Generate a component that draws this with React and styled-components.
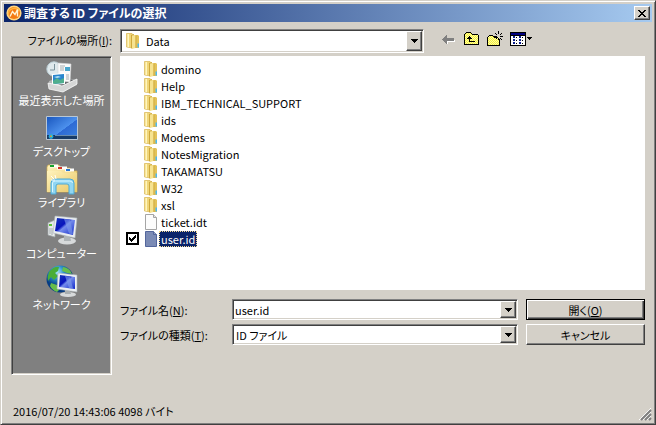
import { useState } from "react";
import styled, { createGlobalStyle, css } from "styled-components";

const GlobalStyle = createGlobalStyle`
  * {
    box-sizing: border-box;
  }
  body {
    margin: 0;
    background: #d4d0c8;
  }
  body, button, input, select {
    font-family: "Noto Sans CJK JP", "Liberation Sans", sans-serif;
    font-size: 11px;
    line-height: 14px;
    font-feature-settings: "palt";
    color: #000;
  }
`;

const raised = css`
  border: 1px solid;
  border-color: #fff #404040 #404040 #fff;
  box-shadow: inset -1px -1px #808080;
`;
const sunken = css`
  border: 1px solid;
  border-color: #808080 #fff #fff #808080;
  box-shadow: inset 1px 1px #404040, inset -1px -1px #d4d0c8;
`;

const Dialog = styled.div`
  display: flex;
  flex-direction: column;
  min-height: 100vh;
  padding: 3px;
  background: #d4d0c8;
  border: 1px solid;
  border-color: #d4d0c8 #404040 #404040 #d4d0c8;
  box-shadow: inset 1px 1px #fff, inset -1px -1px #808080;
`;
const TitleBar = styled.header`
  display: flex;
  align-items: center;
  gap: 2px;
  height: 18px;
  padding: 0 2px;
  background: linear-gradient(to right, #0a246a, #a6caf0);
`;
const Title = styled.h1`
  flex: 1;
  margin: 0;
  font-size: 12px;
  line-height: 18px;
  font-weight: 700;
  color: #fff;
`;
const CloseButton = styled.button`
  ${raised}
  display: flex;
  align-items: center;
  justify-content: center;
  width: 16px;
  height: 14px;
  padding: 0;
  background: #d4d0c8;
`;
const LookIn = styled.div`
  display: flex;
  align-items: center;
  padding: 7px 6px 3px 8px;
`;
const LookInLabel = styled.label`
  width: 108px;
  padding: 0 8px 2px 0;
  text-align: right;
  white-space: nowrap;
`;
const Combo = styled.div`
  ${sunken}
  display: flex;
  flex: ${(p) => (p.$wide ? "1" : "0 1 304px")};
  min-width: 0;
  height: ${(p) => (p.$tall ? "24px" : "21px")};
  padding: 1px;
  background: #fff;
`;
const ComboIcon = styled.span`
  display: flex;
  align-items: center;
  padding-left: 4px;
`;
const Select = styled.select`
  appearance: none;
  flex: 1;
  min-width: 0;
  margin-right: -16px;
  padding: 0 16px 0 ${(p) => p.$indent || "2px"};
  border: 0;
  outline: 0;
  background: transparent;
`;
const TextInput = styled.input`
  flex: 1;
  min-width: 0;
  padding: 0 1px;
  border: 0;
  outline: 0;
  background: transparent;
`;
const Drop = styled.span`
  ${raised}
  display: flex;
  align-items: center;
  justify-content: center;
  width: 16px;
  padding: 0;
  background: #d4d0c8;
  pointer-events: none;
`;
const DropButton = styled(Drop)`
  pointer-events: auto;
`;
const Toolbar = styled.div`
  display: flex;
  align-items: center;
  gap: 8px;
  padding: 0 0 4px 18px;
`;
const ToolButton = styled.button`
  display: flex;
  padding: 0;
  border: 0;
  background: none;
  svg {
    overflow: visible;
  }
`;
const Content = styled.div`
  display: flex;
  flex: 1;
  gap: 8px;
  padding: 0 7px;
`;
const Places = styled.nav`
  ${sunken}
  width: 101px;
  flex: none;
  padding: 4px 0;
  background: #808080;
`;
const Place = styled.button`
  display: flex;
  flex-direction: column;
  align-items: center;
  width: 100%;
  height: 51px;
  padding: 0;
  border: 0;
  background: none;
  color: #fff;
  white-space: nowrap;
`;
const Main = styled.main`
  display: flex;
  flex: 1;
  flex-direction: column;
  min-width: 0;
`;
const FileList = styled.ul`
  flex: 1;
  margin: 0;
  padding: 4px 0 0 6px;
  list-style: none;
  background: #fff;
`;
const FileRow = styled.li`
  display: grid;
  grid-template-columns: 18px 15px max-content;
  align-items: center;
  height: 17px;
`;
const FileName = styled.label`
  grid-column: 3;
  padding: 0 1px;
  line-height: 14px;
  border: 1px dotted ${(p) => (p.$selected ? "#f5db95" : "transparent")};
  background: ${(p) => (p.$selected ? "#0a246a" : "transparent")};
  color: ${(p) => (p.$selected ? "#fff" : "#000")};
`;
const FileIcon = styled.span`
  display: flex;
  grid-column: 2;
`;
const CheckCell = styled.span`
  display: grid;
  > * {
    grid-area: 1 / 1;
  }
  svg {
    pointer-events: none;
  }
`;
const Checkbox = styled.input`
  appearance: none;
  width: 13px;
  height: 13px;
  margin: 0;
  border: 2px solid #000;
  background: #fff;
`;
const Form = styled.div`
  display: grid;
  grid-template-columns: 104px 1fr 119px;
  column-gap: 8px;
  row-gap: 4px;
  align-items: center;
  padding: 9px 0 30px;
`;
const FieldLabel = styled.label`
  white-space: nowrap;
`;
const PushButton = styled.button`
  ${raised}
  height: 21px;
  padding: 0;
  background: #d4d0c8;
  ${(p) =>
    p.$primary &&
    css`
      border-color: #000;
      box-shadow: inset 1px 1px #fff, inset -1px -1px #404040,
        inset -2px -2px #808080;
    `}
`;
const StatusBar = styled.footer`
  display: flex;
  align-items: flex-end;
  justify-content: space-between;
  height: 46px;
  padding-left: 9px;
`;
const StatusText = styled.span`
  padding-bottom: 3px;
`;

const Arrow = () => (
  <svg width="7" height="4" shapeRendering="crispEdges">
    <path d="M0 0h7v1h-1v1h-1v1h-1v1h-1v-1h-1v-1h-1v-1h-1z" />
  </svg>
);

const AppIcon = () => (
  <svg width="16" height="16" viewBox="0 0 16 16">
    <circle cx="8" cy="8" r="7.6" fill="#ffd681" />
    <circle cx="8" cy="8" r="6" fill="#f57a12" />
    <path d="M2.5 10a6 6 0 0 1 11-4" fill="none" stroke="#ffb43c" strokeWidth="1.5" />
    <path d="M4 11.5l2.5-5 2.5 3 2.5-5v7" fill="none" stroke="#fff3d5" strokeWidth="1.4" />
  </svg>
);

const Folder = () => (
  <svg width="14" height="16" viewBox="0 0 14 16">
    <path d="M8 2h4l1 1v12H8z" fill="#e3c35a" />
    <path d="M.5.5H6l1 1V15l-6.5-1z" fill="#f0d679" stroke="#d9b654" strokeWidth=".7" />
    <path d="M1.5 1H3v13H1.5z" fill="#fff6bf" />
    <path d="M5 2l3-1v13.5l-3 1z" fill="#cfa93b" />
    <path d="M6 2.5L9.5 2v13L6 16z" fill="#f6e391" />
    <path d="M9.5 2.5h1V15h-1z" fill="#d2ad40" />
    <path d="M11.5 10.5H13v4h-1.5z" fill="#4ab8f0" />
  </svg>
);

const Page = ({ selected }) => (
  <svg width="14" height="16" viewBox="0 0 14 16">
    <path
      d="M1.5.5h8l3 3v12h-11z"
      fill={selected ? "#7b8bb5" : "#fcfcfc"}
      stroke={selected ? "#53669c" : "#a5a5a5"}
    />
    <path
      d="M9.5.5v3h3"
      fill={selected ? "#93a0c4" : "#e5e5e5"}
      stroke={selected ? "#53669c" : "#a5a5a5"}
    />
  </svg>
);

const BackIcon = () => (
  <svg width="14" height="16" shapeRendering="crispEdges">
    <path d="M2 9h11v2H6v2H5v-1H4v-1H3v-1H2z" fill="#fff" />
    <path d="M0 8h1V7h1V6h1V5h1V4h1v3h7v3H5v3H4v-1H3v-1H2v-1H1V9H0z" fill="#808080" />
  </svg>
);

const Hatch = ({ id }) => (
  <pattern id={id} width="2" height="2" patternUnits="userSpaceOnUse">
    <path d="M0 0h2v2H0z" fill="#ffffa0" />
    <path d="M0 0h1v1H0zM1 1h1v1H1z" fill="#f4ee42" />
  </pattern>
);

const UpIcon = () => (
  <svg width="15" height="16" shapeRendering="crispEdges">
    <defs>
      <Hatch id="up" />
    </defs>
    <path d="M1 2h1V1h5v1h1v1h6v11H1z" fill="url(#up)" />
    <path d="M2 1h5v1H2zM1 2h1v1H1zM7 2h1v1H7zM8 3h6v1H8zM0 3h1v11H0zM14 4h1v10h-1zM1 13h13v1H1z" />
    <path d="M5 5h1v1h1v1h1v1H6v2h5v1H5V8H3V7h1V6h1z" />
  </svg>
);

const NewFolderIcon = () => (
  <svg width="15" height="16" shapeRendering="crispEdges">
    <defs>
      <Hatch id="new" />
    </defs>
    <path d="M1 5h6v1h5v8H1z" fill="url(#new)" />
    <path d="M2 4h4v1H2zM1 5h1v1H1zM6 5h1v1H6zM7 6h4v1H7zM0 6h1v8H0zM12 8h1v6h-1zM0 14h13v1H0z" />
    <path d="M11 0h1v3h-1zM11 7h1v2h-1zM7 5h3v1H7zM13 5h3v1h-3zM8 2h1v1H8zM9 3h1v1H9zM13 3h1v1h-1zM14 2h1v1h-1zM9 7h1v1H9zM13 7h1v1h-1zM14 8h1v1h-1z" />
  </svg>
);

const ViewIcon = () => (
  <svg width="23" height="16" shapeRendering="crispEdges">
    <path d="M0 1h16v14H0z" />
    <path d="M1 2h14v2H1z" fill="#000080" />
    <path d="M1 5h14v9H1z" fill="#fff" />
    <path
      d="M3 5h2v2H3zM9 5h2v2H9zM3 8h2v2H3zM9 8h2v2H9zM3 11h2v2H3zM9 11h2v2H9z"
      fill="#0a1e8c"
    />
    <path d="M6 6h1v1H6zM12 6h1v1h-1zM6 9h1v1H6zM12 9h1v1h-1zM6 12h1v1H6zM12 12h1v1h-1z" />
    <path d="M17 6h5v1h-1v1h-1v1h-1V8h-1V7h-1z" />
  </svg>
);

const Gradients = () => (
  <svg width="0" height="0" style={{ display: "block" }} aria-hidden="true">
    <defs>
      <linearGradient id="screen" x1="0" y1="0" x2="1" y2="1">
        <stop offset="0" stopColor="#1836b8" />
        <stop offset=".4" stopColor="#0714bd" />
        <stop offset=".5" stopColor="#748cec" />
        <stop offset="1" stopColor="#1027ca" />
      </linearGradient>
      <linearGradient id="desk" x1="0" y1="0" x2="1" y2="1">
        <stop offset="0" stopColor="#1855bd" />
        <stop offset=".55" stopColor="#4d91ed" />
        <stop offset=".56" stopColor="#2d6ad5" />
        <stop offset="1" stopColor="#3b83df" />
      </linearGradient>
      <linearGradient id="gold" x1="0" y1="0" x2="1" y2="1">
        <stop offset="0" stopColor="#fff3bd" />
        <stop offset="1" stopColor="#e8c766" />
      </linearGradient>
      <radialGradient id="globe" cx=".4" cy=".25">
        <stop offset="0" stopColor="#a7e8f7" />
        <stop offset=".5" stopColor="#2a8dca" />
        <stop offset="1" stopColor="#063c83" />
      </radialGradient>
    </defs>
  </svg>
);

const RecentIcon = () => (
  <svg width="32" height="32" viewBox="0 0 32 32">
    <path d="M3 20l12-4 16 3v5L17 31 3 27z" fill="#b5b6b7" />
    <path d="M6 20l11-3 11 2-12 6z" fill="#606366" />
    <circle cx="8" cy="8" r="7.2" fill="#dfe9ec" stroke="#b9cdd4" />
    <path d="M8.5 3v6H4" fill="none" stroke="#7b929b" />
    <path d="M12 2l13 1-1 18-12-1z" fill="#fafafa" stroke="#d5d7d8" strokeWidth=".6" />
    <path d="M14 5h5M14 7h4M14 9h4M20 14h3M20 16h3M20 18h3" stroke="#a5adb0" />
    <path d="M19 6h5v4h-5z" fill="#4aa6cc" />
    <path d="M6 13l13-1v11l-13 1z" fill="#fff" />
    <path d="M7 14l11-1v9l-11 1z" fill="#2785cd" />
    <path d="M7 20l4-3 3 2 4-2v5l-11 1z" fill="#4fae8d" />
    <path d="M8 16l4-1 3 1-4 1z" fill="#b5e1f5" />
    <path d="M2 22l14 3 15-7v5l-14 8L3 28z" fill="#d5d6d6" stroke="#f7f7f7" strokeWidth=".8" />
  </svg>
);

const DesktopIcon = () => (
  <svg width="32" height="32" viewBox="0 0 32 32">
    <path d="M.5 4.5h31v23H.5z" fill="url(#desk)" stroke="#b8c7d5" />
    <path d="M1 23h30v4H1z" fill="#173b67" />
    <path d="M9 23h22v1H9z" fill="#6a8cad" />
    <circle cx="5" cy="24.5" r="2.4" fill="#26a7d9" />
    <path d="M4 24l1-1v2H4z" fill="#ef7a37" />
    <path d="M5 23l1 1v1H5z" fill="#9bd34a" />
  </svg>
);

const LibraryIcon = () => (
  <svg width="32" height="32" viewBox="0 0 32 32">
    <path d="M2 2h11l2 3h9l1 3h6v21H1V4z" fill="url(#gold)" stroke="#d1ad4c" strokeWidth=".7" />
    <path d="M4 1.5h8v3H4z" fill="#fff" />
    <path d="M4 2h4v2H4z" fill="#16a32b" />
    <path d="M11 3.5h10v3H11z" fill="#fff" />
    <path d="M12 4h4v2h-4z" fill="#d2352c" />
    <path d="M19 5.5h9v3h-9z" fill="#fff" />
    <path d="M20 6h4v2h-4z" fill="#2675d3" />
    <path d="M1 8h14l2 2h14v19H1z" fill="url(#gold)" />
    <path
      d="M5 31V20q0-4 4-4h15q4 0 4 4v11h-5v-8q0-2-2-2h-9q-2 0-2 2v8z"
      fill="#91d6f2"
      stroke="#4aa8d5"
    />
    <path d="M6.5 29v-9q0-2 3-2h14q3 0 3 2" fill="none" stroke="#d9f7ff" />
    <path d="M5 13l3 3M9 12l1 4M5 17h4" stroke="#fff" />
  </svg>
);

const ComputerIcon = () => (
  <svg width="32" height="32" viewBox="0 0 32 32">
    <path d="M2 9l7-3v17l-7-2z" fill="#e6e9e9" stroke="#a2aaac" strokeWidth=".7" />
    <path d="M3 10h3v2H3z" fill="#5dc336" />
    <path d="M4 14v6M6 14v7" stroke="#a3abae" />
    <ellipse cx="21" cy="27" rx="9" ry="3.5" fill="#d7dadb" />
    <path d="M18 22h6l1 5h-7z" fill="#aeb4b6" />
    <path d="M9 2l22 2-2 20-22-5z" fill="#e9edf0" stroke="#a9b2b6" strokeWidth=".6" />
    <path d="M11 4l18 2-2 15-18-4z" fill="url(#screen)" />
    <path d="M18 5l6 .5 3 15-4-1z" fill="#7d99e9" opacity=".65" />
  </svg>
);

const NetworkIcon = () => (
  <svg width="32" height="32" viewBox="0 0 32 32">
    <circle cx="14" cy="14" r="13.5" fill="url(#globe)" />
    <path d="M3 7q5-6 10-5l-1 4-3 2 3 3-4 4-3-3-3 4q-1-4 1-9z" fill="#49ad37" />
    <path d="M17 2q7 1 9 7l-5-1-5-2zM5 18l6 2 2 5-2 2q-5-2-7-6z" fill="#67bd4b" />
    <ellipse cx="22" cy="29.5" rx="8" ry="2.5" fill="#d7dadb" />
    <path d="M19 25h5l1 4h-6z" fill="#a9afb1" />
    <path d="M12 8l19 2v17l-20-3z" fill="#edf0f3" stroke="#a9b2b6" strokeWidth=".6" />
    <path d="M14 10l15 2v12l-16-2z" fill="url(#screen)" />
    <path d="M19 11l5 .5 3 12-4-.5z" fill="#7d99e9" opacity=".65" />
  </svg>
);

const places = [
  { name: "最近表示した場所", Icon: RecentIcon },
  { name: "デスクトップ", Icon: DesktopIcon },
  { name: "ライブラリ", Icon: LibraryIcon },
  { name: "コンピューター", Icon: ComputerIcon },
  { name: "ネットワーク", Icon: NetworkIcon },
];

const folders = [
  "domino",
  "Help",
  "IBM_TECHNICAL_SUPPORT",
  "ids",
  "Modems",
  "NotesMigration",
  "TAKAMATSU",
  "W32",
  "xsl",
];

const App = () => {
  const [fileName, setFileName] = useState("user.id");
  const [checked, setChecked] = useState(true);

  return (
    <Dialog role="dialog" aria-labelledby="title">
      <GlobalStyle />
      <TitleBar>
        <AppIcon />
        <Title id="title">調査する ID ファイルの選択</Title>
        <CloseButton aria-label="閉じる">
          <svg width="8" height="7" shapeRendering="crispEdges">
            <path d="M0 0h2v1h1v1h2V1h1V0h2v1H7v1H6v1H5v1h1v1h1v1h1v1H6V6H5V5H3v1H2v1H0V6h1V5h1V4h1V3H2V2H1V1H0z" />
          </svg>
        </CloseButton>
      </TitleBar>
      <LookIn>
        <LookInLabel htmlFor="location">
          ファイルの場所(<u>I</u>):
        </LookInLabel>
        <Combo $tall>
          <ComboIcon>
            <Folder />
          </ComboIcon>
          <Select id="location" $indent="6px">
            <option>Data</option>
          </Select>
          <Drop>
            <Arrow />
          </Drop>
        </Combo>
        <Toolbar>
          <ToolButton aria-label="戻る" disabled>
            <BackIcon />
          </ToolButton>
          <ToolButton aria-label="上へ">
            <UpIcon />
          </ToolButton>
          <ToolButton aria-label="新しいフォルダー">
            <NewFolderIcon />
          </ToolButton>
          <ToolButton aria-label="表示">
            <ViewIcon />
          </ToolButton>
        </Toolbar>
      </LookIn>
      <Content>
        <Places>
          <Gradients />
          {places.map(({ name, Icon }) => (
            <Place key={name}>
              <Icon />
              {name}
            </Place>
          ))}
        </Places>
        <Main>
          <FileList>
            {folders.map((name) => (
              <FileRow key={name}>
                <FileIcon>
                  <Folder />
                </FileIcon>
                <FileName as="span">{name}</FileName>
              </FileRow>
            ))}
            <FileRow>
              <FileIcon>
                <Page />
              </FileIcon>
              <FileName as="span">ticket.idt</FileName>
            </FileRow>
            <FileRow>
              <CheckCell>
                <Checkbox
                  id="user-id"
                  type="checkbox"
                  checked={checked}
                  onChange={(e) => setChecked(e.target.checked)}
                />
                {checked && (
                  <svg width="13" height="13" shapeRendering="crispEdges">
                    <path d="M3 5h1v1h1v1h1V6h1V5h1V4h1V3h1v3H9v1H8v1H7v1H6v1H5V9H4V8H3z" />
                  </svg>
                )}
              </CheckCell>
              <FileIcon>
                <Page selected />
              </FileIcon>
              <FileName htmlFor="user-id" $selected>
                user.id
              </FileName>
            </FileRow>
          </FileList>
          <Form>
            <FieldLabel htmlFor="file-name">
              ファイル名(<u>N</u>):
            </FieldLabel>
            <Combo $wide>
              <TextInput
                id="file-name"
                value={fileName}
                onChange={(e) => setFileName(e.target.value)}
              />
              <DropButton as="button" aria-label="履歴">
                <Arrow />
              </DropButton>
            </Combo>
            <PushButton $primary>
              開く(<u>O</u>)
            </PushButton>
            <FieldLabel htmlFor="file-type">
              ファイルの種類(<u>T</u>):
            </FieldLabel>
            <Combo $wide>
              <Select id="file-type">
                <option>ID ファイル</option>
              </Select>
              <Drop>
                <Arrow />
              </Drop>
            </Combo>
            <PushButton>キャンセル</PushButton>
          </Form>
        </Main>
      </Content>
      <StatusBar>
        <StatusText>2016/07/20 14:43:06 4098 バイト</StatusText>
        <svg width="13" height="13">
          <path d="M0 12L12 0M4 12l8-8M8 12l4-4" stroke="#fff" />
          <path d="M2 12L12 2M6 12l6-6M10 12l2-2" stroke="#808080" strokeWidth="2" />
        </svg>
      </StatusBar>
    </Dialog>
  );
};

export default App;
